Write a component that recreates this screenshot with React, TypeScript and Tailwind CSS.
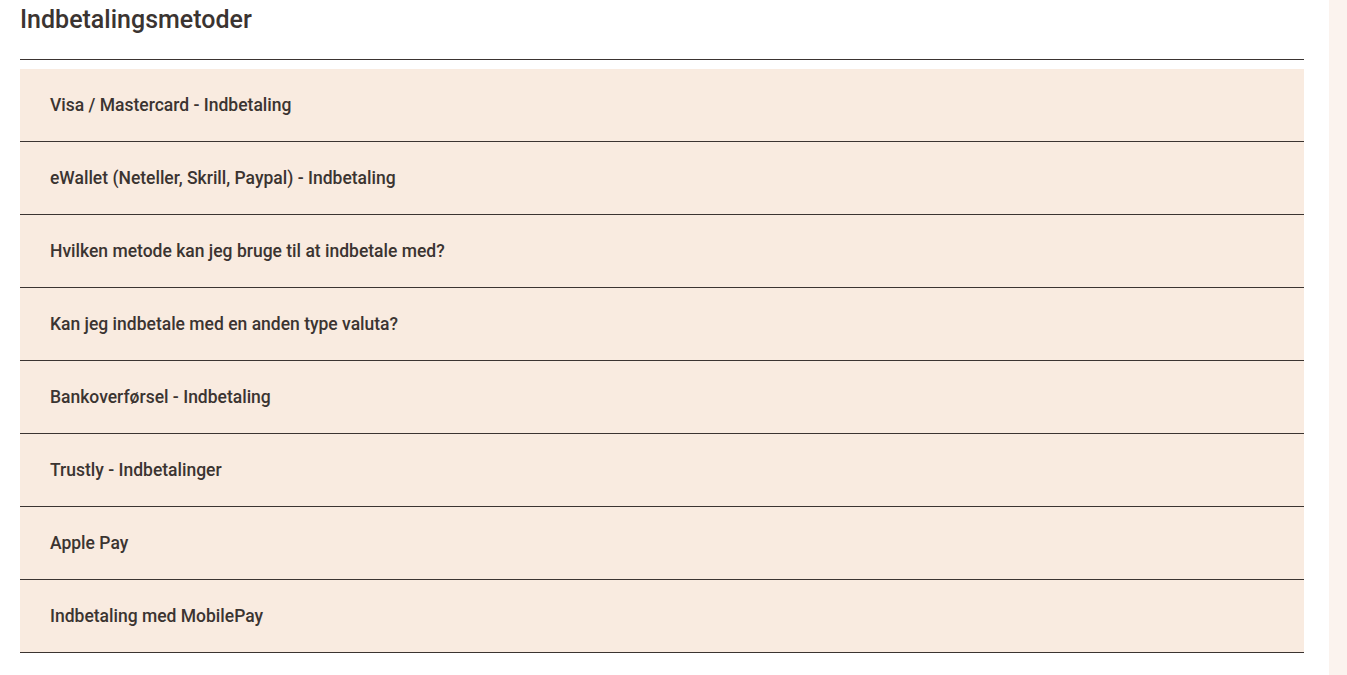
const items = [
  "Visa / Mastercard - Indbetaling",
  "eWallet (Neteller, Skrill, Paypal) - Indbetaling",
  "Hvilken metode kan jeg bruge til at indbetale med?",
  "Kan jeg indbetale med en anden type valuta?",
  "Bankoverførsel - Indbetaling",
  "Trustly - Indbetalinger",
  "Apple Pay",
  "Indbetaling med MobilePay",
];

export default function App() {
  return (
    <div className="flex w-full h-[675px] bg-white font-['Roboto',sans-serif] text-[#3b3431]">
      <div className="flex-1 pl-5 pr-[25px]">
        <div className="h-[59px] pt-[1px] text-[25px] font-medium">
          Indbetalingsmetoder
        </div>
        <div className="border-t border-[#3b3431] pt-[9px]">
          {items.map((item) => (
            <div
              key={item}
              className="h-[73px] flex items-center pl-[30px] bg-[#f9ebe0] border-b border-[#3b3431] text-[17.5px] font-medium"
            >
              {item}
            </div>
          ))}
        </div>
      </div>
      <div className="w-[18px] bg-[#fbf3ee]" />
    </div>
  );
}
